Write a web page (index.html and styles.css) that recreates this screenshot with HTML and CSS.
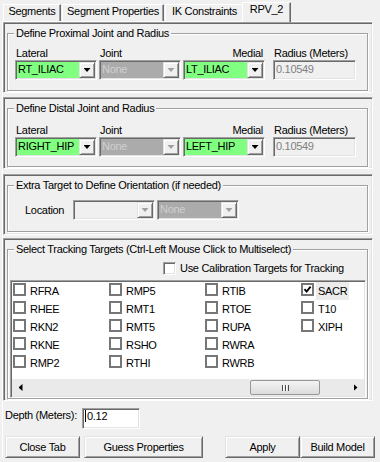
FILE: index.html
```html
<!DOCTYPE html>
<html lang="en">
<head>
    <meta charset="UTF-8">
    <meta name="viewport" content="width=device-width, initial-scale=1.0">
    <title>RPV_2</title>
    <link rel="stylesheet" href="styles.css">
</head>
<body>
    <div class="tabs">
        <div class="tab t-seg">Segments</div>
        <div class="tab t-props">Segment Properties</div>
        <div class="tab t-ik">IK Constraints</div>
        <div class="tab t-rpv active">RPV_2</div>
    </div>

    <div class="page">
        <div class="panel p-prox">
            <div class="group">
                <div class="group-title">Define Proximal Joint and Radius</div>
                <div class="joint-grid">
                    <label class="lbl">Lateral</label>
                    <label class="lbl">Joint</label>
                    <label class="lbl right">Medial</label>
                    <label class="lbl radius">Radius (Meters)</label>
                    <div class="combo green"><span class="val">RT_ILIAC</span><span class="drop"></span></div>
                    <div class="combo disabled"><span class="val">None</span><span class="drop"></span></div>
                    <div class="combo green"><span class="val">LT_ILIAC</span><span class="drop"></span></div>
                    <div class="numbox radius">0.10549</div>
                </div>
            </div>
        </div>

        <div class="panel p-dist">
            <div class="group">
                <div class="group-title">Define Distal Joint and Radius</div>
                <div class="joint-grid">
                    <label class="lbl">Lateral</label>
                    <label class="lbl">Joint</label>
                    <label class="lbl right">Medial</label>
                    <label class="lbl radius">Radius (Meters)</label>
                    <div class="combo green"><span class="val">RIGHT_HIP</span><span class="drop"></span></div>
                    <div class="combo disabled"><span class="val">None</span><span class="drop"></span></div>
                    <div class="combo green"><span class="val">LEFT_HIP</span><span class="drop"></span></div>
                    <div class="numbox radius">0.10549</div>
                </div>
            </div>
        </div>

        <div class="panel p-extra">
            <div class="group">
                <div class="group-title">Extra Target to Define Orientation (if needed)</div>
                <div class="loc-row">
                    <label class="loc-lbl">Location</label>
                    <div class="combo off"><span class="val"></span><span class="drop"></span></div>
                    <div class="combo disabled"><span class="val">None</span><span class="drop"></span></div>
                </div>
            </div>
        </div>

        <div class="panel p-track">
            <div class="group">
                <div class="group-title">Select Tracking Targets (Ctrl-Left Mouse Click to Multiselect)</div>
                <div class="calib"><span class="cb3d"></span><span>Use Calibration Targets for Tracking</span></div>
                <div class="list">
                    <div class="items">
                        <div class="item"><span class="cb"></span>RFRA</div>
                        <div class="item"><span class="cb"></span>RHEE</div>
                        <div class="item"><span class="cb"></span>RKN2</div>
                        <div class="item"><span class="cb"></span>RKNE</div>
                        <div class="item"><span class="cb"></span>RMP2</div>
                        <div class="item"><span class="cb"></span>RMP5</div>
                        <div class="item"><span class="cb"></span>RMT1</div>
                        <div class="item"><span class="cb"></span>RMT5</div>
                        <div class="item"><span class="cb"></span>RSHO</div>
                        <div class="item"><span class="cb"></span>RTHI</div>
                        <div class="item"><span class="cb"></span>RTIB</div>
                        <div class="item"><span class="cb"></span>RTOE</div>
                        <div class="item"><span class="cb"></span>RUPA</div>
                        <div class="item"><span class="cb"></span>RWRA</div>
                        <div class="item"><span class="cb"></span>RWRB</div>
                        <div class="item"><span class="cb"><svg viewBox="0 0 9 9" width="9" height="9"><polyline points="1.5,4.2 3.6,6.5 7.6,1.6" fill="none" stroke="#000" stroke-width="1.8"/></svg></span><span class="sel">SACR</span></div>
                        <div class="item"><span class="cb"></span>T10</div>
                        <div class="item"><span class="cb"></span>XIPH</div>
                    </div>
                    <div class="hscroll">
                        <span class="arr left"></span>
                        <span class="thumb"><span class="grip"></span></span>
                        <span class="arr right"></span>
                    </div>
                </div>
            </div>
        </div>

        <div class="depth">
            <label class="depth-lbl">Depth (Meters):</label>
            <div class="textbox"><span class="caret"></span>0.12</div>
        </div>

        <div class="actions">
            <button class="btn b-close">Close Tab</button>
            <button class="btn b-guess">Guess Properties</button>
            <button class="btn b-apply">Apply</button>
            <button class="btn b-build">Build Model</button>
        </div>
    </div>
</body>
</html>
```

FILE: styles.css
```css
body {
    margin: 0;
    width: 380px;
    height: 462px;
    overflow: hidden;
    background: #f0f0f0;
    font-family: "Liberation Sans", Arial, sans-serif;
    font-size: 11px;
    letter-spacing: -0.3px;
    color: #000;
}

/* tab strip */
.tabs {
    display: flex;
    align-items: flex-end;
    height: 21px;
    width: 370px;
    margin-left: 2px;
    padding-left: 1px;
    border-bottom: 1px solid #fff;
}
.tab {
    height: 17px;
    box-sizing: border-box;
    margin-right: 1px;
    border-top: 1px solid #fff;
    border-left: 1px solid #fff;
    border-right: 1px solid #696969;
    box-shadow: inset -1px 0 #a0a0a0;
    background: #f0f0f0;
    text-align: center;
    line-height: 13px;
    white-space: nowrap;
}
.t-seg { width: 58px; }
.t-props { width: 102px; }
.t-ik { width: 79px; }
.tab.active {
    width: 49px;
    height: 20px;
    margin-left: -3px;
    margin-bottom: -1px;
    margin-right: 0;
}

.page {
    margin-left: 2px;
    border-left: 1px solid #fff;
}

/* sunken panels holding each group */
.panel {
    width: 370px;
    box-sizing: border-box;
    padding: 1px;
    border: 1px solid;
    border-color: #a0a0a0 #fff #fff #a0a0a0;
    box-shadow: inset 1px 1px #696969, inset -1px -1px #e3e3e3;
}
.p-dist { margin-top: 4px; }
.p-extra { margin-top: 5px; }
.p-track { margin-top: 3px; }

.group {
    margin: 9px 3px 0 2px;
    border: 1px solid #a0a0a0;
    box-shadow: inset 1px 1px #fff, 1px 1px #fff;
}
.p-extra .group { margin-bottom: 1px; }
.group-title {
    display: table;
    margin: -7px 0 0 6px;
    padding: 0 2px;
    line-height: 12px;
    background: #f0f0f0;
    white-space: nowrap;
}

.joint-grid {
    display: grid;
    grid-template-columns: 82px 82px 82px 89px;
    column-gap: 2px;
    row-gap: 1px;
    padding: 8px 0 10px 7px;
}
.p-dist .joint-grid { padding-top: 10px; padding-bottom: 9px; }
.lbl {
    line-height: 12px;
    padding-left: 1px;
    white-space: nowrap;
}
.lbl.right {
    text-align: right;
    padding-right: 2px;
}
.radius { margin-left: 6px; }

/* combo boxes */
.combo, .numbox, .textbox, .list, .cb3d {
    box-sizing: border-box;
    border: 1px solid;
    border-color: #a0a0a0 #fff #fff #a0a0a0;
    box-shadow: inset 1px 1px #696969, inset -1px -1px #e3e3e3;
}
.combo {
    display: flex;
    width: 82px;
    height: 20px;
    padding: 1px;
    background: #fff;
}
.combo .val {
    flex: 1;
    padding-left: 1px;
    line-height: 15px;
    white-space: nowrap;
    overflow: hidden;
}
.combo.green { background: #80ff80; }
.combo.disabled { background: #ababab; color: #d0d0d0; }
.combo.off { background: #f0f0f0; }
.drop {
    display: flex;
    align-items: center;
    justify-content: center;
    width: 16px;
    height: 16px;
    box-sizing: border-box;
    border: 1px solid;
    border-color: #e3e3e3 #696969 #696969 #e3e3e3;
    box-shadow: inset 1px 1px #fff, inset -1px -1px #a0a0a0;
    background: #f0f0f0;
}
.drop::after {
    content: "";
    width: 7px;
    height: 4px;
    background: #000;
    clip-path: polygon(0 0, 100% 0, 50% 100%);
}
.disabled .drop::after, .off .drop::after { background: #a0a0a0; }

.numbox {
    width: 83px;
    height: 20px;
    padding: 1px 0 0 2px;
    line-height: 15px;
    background: #f0f0f0;
    color: #808080;
}

.loc-row {
    display: flex;
    gap: 2px;
    padding: 9px 0 11px 17px;
}
.loc-lbl {
    width: 46px;
    line-height: 20px;
}

/* tracking targets */
.calib {
    display: flex;
    gap: 4px;
    padding: 6px 0 0 155px;
    line-height: 14px;
    white-space: nowrap;
}
.cb3d {
    width: 13px;
    height: 13px;
    margin-top: 1px;
    background: #fff;
}
.list {
    display: flex;
    flex-direction: column;
    width: 356px;
    height: 118px;
    margin: 5px 0 0 2px;
    padding: 1px;
    background: #fff;
}
.items {
    flex: 1;
    display: grid;
    grid-auto-flow: column;
    grid-template-rows: repeat(5, 18px);
    grid-auto-columns: 96px;
    padding-left: 1px;
}
.item {
    display: flex;
    gap: 4px;
    line-height: 18px;
}
.cb {
    display: flex;
    align-items: center;
    justify-content: center;
    width: 13px;
    height: 13px;
    box-sizing: border-box;
    margin-top: 1px;
    border: 2px solid #777;
    background: #fff;
}
.sel {
    margin-left: -2px;
    padding: 0 2px;
    background: #ececec;
}

.hscroll {
    display: flex;
    align-items: center;
    height: 17px;
    background: #eaeaea;
}
.arr {
    display: flex;
    align-items: center;
    justify-content: center;
    width: 17px;
    height: 17px;
}
.arr::after {
    content: "";
    width: 4px;
    height: 7px;
    background: #000;
}
.arr.left::after { clip-path: polygon(100% 0, 100% 100%, 0 50%); }
.arr.right { margin-left: auto; }
.arr.right::after { clip-path: polygon(0 0, 100% 50%, 0 100%); }
.thumb {
    display: flex;
    align-items: center;
    justify-content: center;
    width: 70px;
    height: 15px;
    box-sizing: border-box;
    margin-left: 221px;
    border: 1px solid #979797;
    border-radius: 2px;
    background: linear-gradient(#f4f4f4, #dcdcdc);
}
.grip {
    width: 7px;
    height: 6px;
    background: repeating-linear-gradient(90deg, #4d4d4d 0 1px, #fff 1px 2px, transparent 2px 3px);
}

/* bottom rows */
.depth {
    display: flex;
    margin-top: 7px;
    padding-left: 2px;
}
.depth-lbl {
    width: 77px;
    margin-top: 1px;
    line-height: 12px;
    white-space: nowrap;
}
.textbox {
    display: flex;
    width: 58px;
    height: 21px;
    padding: 1px 0 0 1px;
    line-height: 12px;
    background: #fff;
}
.caret {
    width: 0;
    height: 12px;
    margin: 0 1px 0 1px;
    border-left: 1px solid #000;
}

.actions {
    display: flex;
    margin-top: 7px;
    padding-left: 2px;
}
.btn {
    height: 22px;
    padding: 0;
    box-sizing: border-box;
    border: 1px solid;
    border-color: #e3e3e3 #696969 #696969 #e3e3e3;
    box-shadow: inset 1px 1px #fff, inset -1px -1px #a0a0a0;
    background: #f0f0f0;
    font: inherit;
    letter-spacing: inherit;
    line-height: 20px;
    color: #000;
}
.b-close { width: 75px; margin-right: 4px; }
.b-guess { width: 119px; margin-right: 22px; }
.b-apply { width: 75px; }
.b-build { width: 75px; }
```
